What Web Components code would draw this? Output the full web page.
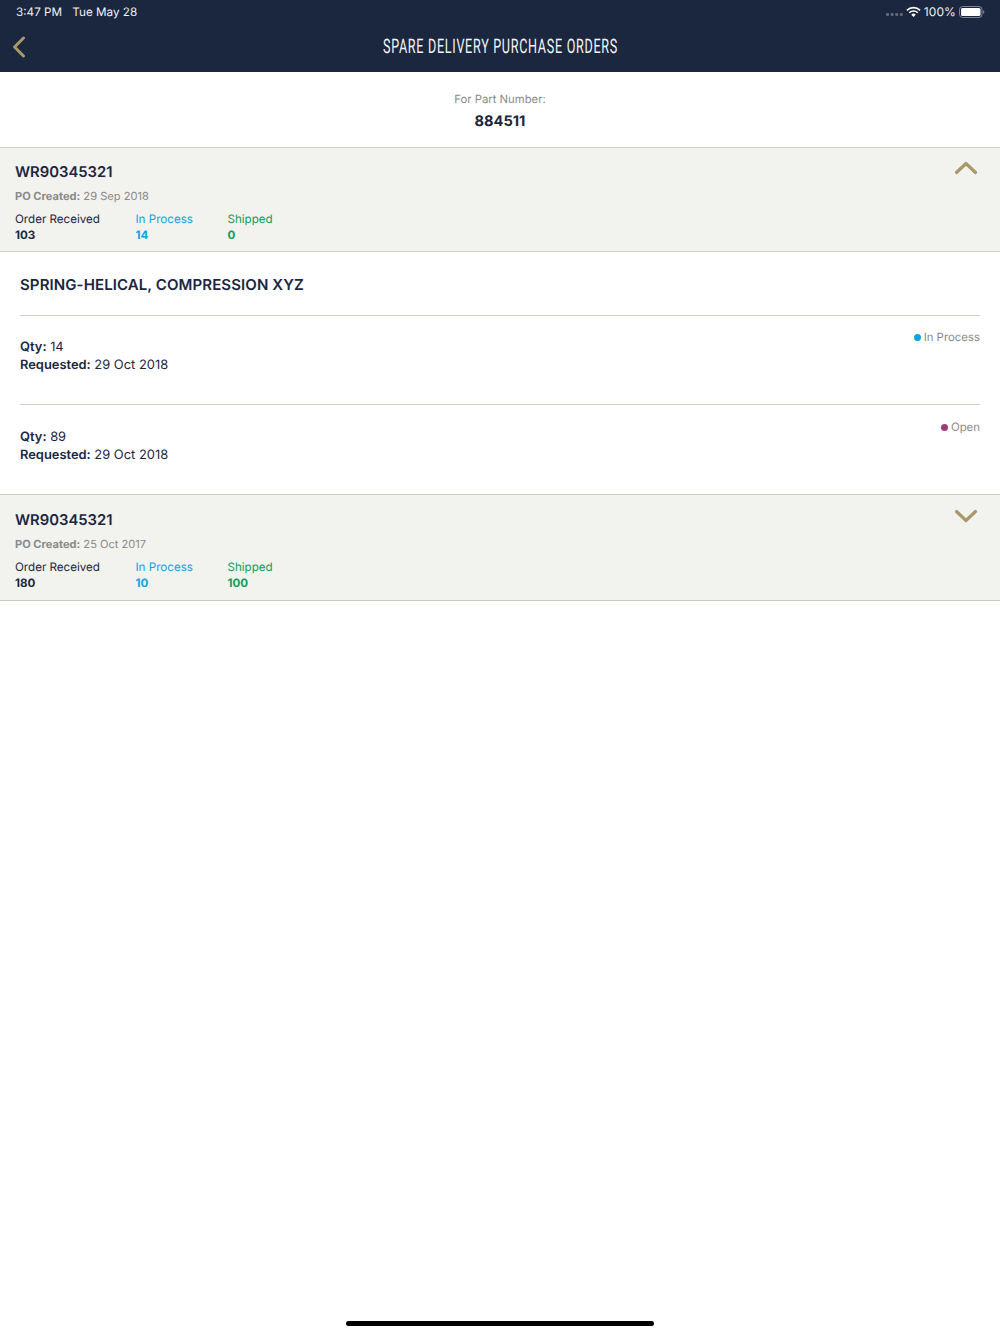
<!DOCTYPE html>
<html>
<head>
<meta charset="utf-8">
<title>Spare Delivery Purchase Orders</title>
<style>
  html, body { margin: 0; height: 100%; background: #fff; }
  body { font-family: Inter, "Liberation Sans", sans-serif; color: #1b2640; text-rendering: geometricPrecision; }
  x-page { height: 1334px; }
</style>
</head>
<body>
<x-page>
  <x-nav-bar slot="top" title="SPARE DELIVERY PURCHASE ORDERS"></x-nav-bar>
  <x-part-banner number="884511"></x-part-banner>
  <x-po-panel number="WR90345321" created="29 Sep 2018" received="103" process="14" shipped="0" open>
    <x-po-detail>
      <x-po-line qty="14" requested="29 Oct 2018" status="In Process" color="#0ba5e0"></x-po-line>
      <x-po-line qty="89" requested="29 Oct 2018" status="Open" color="#9c3d78"></x-po-line>
    </x-po-detail>
  </x-po-panel>
  <x-po-panel number="WR90345321" created="25 Oct 2017" received="180" process="10" shipped="100"></x-po-panel>
</x-page>
<script>
class Page extends HTMLElement {
  constructor() {
    super();
    this.attachShadow({ mode: 'open' }).innerHTML = `
      <style>
        :host { display: flex; flex-direction: column; position: relative; background: #fff; }
        .home {
          position: absolute; left: 346px; bottom: 8px; width: 308px; height: 5px;
          border-radius: 3px; background: #000;
        }
      </style>
      <slot name="top"></slot>
      <slot></slot>
      <div class="home"></div>
    `;
  }
}

class NavBar extends HTMLElement {
  constructor() {
    super();
    this.attachShadow({ mode: 'open' }).innerHTML = `
      <style>
        :host { display: block; height: 72px; background: #1b263f; color: #fff; }
        .status {
          display: flex; align-items: center; justify-content: space-between;
          height: 23px; padding: 1px 15px 0 16px; box-sizing: border-box; font-size: 11.7px; line-height: 22px;
          color: #eef0f3;
        }
        .time span { margin-left: 7px; }
        .right { display: flex; align-items: center; gap: 3px; }
        .right span { font-size: 12px; letter-spacing: .1px; }
        .bar { display: grid; grid-template-columns: 64px 1fr 64px; align-items: center; height: 46px; }
        .back { display: block; margin: 2px 0 0 12px; }
        h1 { margin: 0; text-align: center; font-size: 0; }
        h1 span {
          display: inline-block; transform: scaleX(.63); white-space: nowrap;
          font: 400 20px/46px Roboto, "Liberation Sans", sans-serif; letter-spacing: 1.1px; color: #f4f5f7;
        }
      </style>
      <div class="status">
        <div class="time">3:47 PM <span>Tue May 28</span></div>
        <div class="right">
          <svg width="17" height="4" viewBox="0 0 17 4" style="margin:6px 0 0 0"><g fill="#5f6778"><rect x="0" y="0" width="3" height="3" rx="1"/><rect x="4.6" y="0" width="3" height="3" rx="1"/><rect x="9.2" y="0" width="3" height="3" rx="1"/><rect x="13.8" y="0" width="3" height="3" rx="1"/></g></svg>
          <svg width="15" height="12" viewBox="0 0 16 12"><g fill="none" stroke="#fff" stroke-width="1.8"><path d="M1 4.2a10 10 0 0 1 14 0"/><path d="M3.5 6.8a6.4 6.4 0 0 1 9 0"/></g><path d="M5.7 8.9a3.2 3.2 0 0 1 4.6 0L8 11.4z" fill="#fff"/></svg>
          <span>100%</span>
          <svg width="26" height="12" viewBox="0 0 26 12"><rect x=".5" y=".5" width="22.5" height="11" rx="3" fill="none" stroke="#7d8494"/><rect x="2" y="2" width="19.5" height="8" rx="1.6" fill="#fff"/><path d="M24 4.2c1 .3 1.4 1 1.4 1.8s-.4 1.5-1.4 1.8z" fill="#7d8494"/></svg>
        </div>
      </div>
      <div class="bar">
        <svg class="back" width="14" height="22" viewBox="0 0 14 22"><path d="M11.5 2 2.6 11l8.9 9" fill="none" stroke="#a8986a" stroke-width="3" stroke-linecap="round" stroke-linejoin="round"/></svg>
        <h1><span>${this.getAttribute('title')}</span></h1>
        <div></div>
      </div>
    `;
  }
}

class PartBanner extends HTMLElement {
  constructor() {
    super();
    this.attachShadow({ mode: 'open' }).innerHTML = `
      <style>
        :host { display: block; height: 75px; box-sizing: border-box; padding-top: 19px; text-align: center; }
        .label { font-size: 11.3px; line-height: 16px; color: #8a8a8a; }
        .num { margin-top: 3px; font-size: 14.6px; line-height: 22px; font-weight: 700; color: #1b2640; }
      </style>
      <div class="label">For Part Number:</div>
      <div class="num">${this.getAttribute('number')}</div>
    `;
  }
}

class PoPanel extends HTMLElement {
  constructor() {
    super();
    const open = this.hasAttribute('open');
    const attr = name => this.getAttribute(name);
    const chevron = open ? 'M2.5 12.5 12 3.5l9.5 9' : 'M2.5 3.5 12 12.5l9.5-9';
    this.attachShadow({ mode: 'open' }).innerHTML = `
      <style>
        :host { display: block; }
        header {
          position: relative; height: 103px; box-sizing: content-box; padding: 0 15px;
          background: #f2f2ee; border-top: 1px solid #cfcfc8; border-bottom: 1px solid #cfcfc8;
        }
        :host(:not([open])) header { height: 104px; padding-top: 1px; border-bottom-color: #c8c8c1; }
        :host(:not([open])) svg { top: 13px; }
        h2 { margin: 0; padding-top: 14px; font-size: 14.8px; line-height: 20px; font-weight: 600; color: #1b2640; }
        .created { margin-top: 6px; font-size: 11.1px; line-height: 16px; color: #8a8a8a; }
        .created b { font-weight: 700; }
        .counts { display: flex; margin-top: 7px; font-size: 11.6px; line-height: 16px; }
        .counts b { display: block; font-weight: 700; }
        .c1 { width: 120.5px; color: #1b2640; }
        .c2 { width: 92px; color: #0ba5e0; }
        .c3 { color: #0f9d58; }
        svg { position: absolute; right: 22px; top: 12px; }
      </style>
      <header>
        <h2>${attr('number')}</h2>
        <div class="created"><b>PO Created:</b> ${attr('created')}</div>
        <div class="counts">
          <div class="c1">Order Received<b>${attr('received')}</b></div>
          <div class="c2">In Process<b>${attr('process')}</b></div>
          <div class="c3">Shipped<b>${attr('shipped')}</b></div>
        </div>
        <svg width="24" height="16" viewBox="0 0 24 16"><path d="${chevron}" fill="none" stroke="#a8986a" stroke-width="3.2" stroke-linecap="round" stroke-linejoin="round"/></svg>
      </header>
      <slot></slot>
    `;
  }
}

class PoDetail extends HTMLElement {
  constructor() {
    super();
    this.attachShadow({ mode: 'open' }).innerHTML = `
      <style>
        :host { display: flex; flex-direction: column; height: 242px; box-sizing: border-box; padding: 0 20px; }
        h3 { margin: 0; height: 63px; flex: none; box-sizing: border-box; padding-top: 23px; font-size: 15px; line-height: 20px; font-weight: 600; letter-spacing: .1px; color: #1b2640; }
        ::slotted(x-po-line:last-child) { flex: 1; }
      </style>
      <h3>SPRING-HELICAL, COMPRESSION XYZ</h3>
      <slot></slot>
    `;
  }
}

class PoLine extends HTMLElement {
  constructor() {
    super();
    const attr = name => this.getAttribute(name);
    this.attachShadow({ mode: 'open' }).innerHTML = `
      <style>
        :host {
          display: flex; justify-content: space-between; height: 89px; box-sizing: border-box;
          border-top: 1px solid #cfcfc8; font-size: 12.9px; line-height: 18px; color: #1b2640;
        }
        :host(:last-child) { padding-top: 1px; }
        .info { padding-top: 23px; }
        b { font-weight: 600; }
        .status { display: flex; align-items: center; gap: 3px; height: 16px; margin-top: 13px; font-size: 11.4px; color: #8a8a8a; }
        i { width: 7px; height: 7px; border-radius: 50%; background: ${attr('color')}; }
      </style>
      <div class="info">
        <div><b>Qty:</b> ${attr('qty')}</div>
        <div><b>Requested:</b> ${attr('requested')}</div>
      </div>
      <div class="status"><i></i>${attr('status')}</div>
    `;
  }
}

customElements.define('x-page', Page);
customElements.define('x-nav-bar', NavBar);
customElements.define('x-part-banner', PartBanner);
customElements.define('x-po-panel', PoPanel);
customElements.define('x-po-detail', PoDetail);
customElements.define('x-po-line', PoLine);
</script>
</body>
</html>
